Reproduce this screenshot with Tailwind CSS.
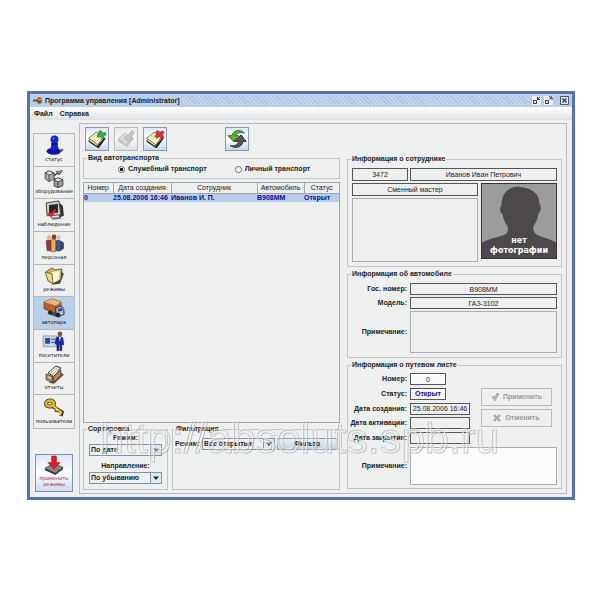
<!DOCTYPE html>
<html lang="ru">
<head>
<meta charset="utf-8">
<title>Программа управления</title>
<script src="https://cdn.jsdelivr.net/npm/@tailwindcss/browser@4"></script>
</head>
<body class="bg-white font-['Liberation_Sans',Arial,sans-serif] text-[7px] leading-[8px] text-[#222]">
<svg class="hidden">
  <symbol id="notes" viewBox="0 0 24 24">
    <path d="M3 15l9-9 10 6-8 11z" fill="#222"/>
    <path d="M2 14l8-7 10 5-8 9z" fill="#f0e58a" stroke="#333" stroke-width="1"/>
    <path d="M2 11l9-7 9 5-7 10z" fill="#fffde0" stroke="#444" stroke-width=".9"/>
    <path d="M6 11l5-4M8 13l6-5M11 15l5-5" stroke="#dcc04a" stroke-width="1.100"/>
    <path d="M2 15l11 7 9-11" fill="none" stroke="#222" stroke-width="1.200"/>
  </symbol>
</svg>
<main class="pt-[91px] pr-[25px] pb-24 pl-[27px]">
<div class="relative border-3 border-[#5670b4] border-t-[#5872ac] bg-[#eef0f0]">
  <header class="flex h-[13px] items-center gap-[3px] bg-[#b9cfe8] pr-[3px] pl-[3px]">
    <svg class="h-[9px] w-[9px]" viewBox="0 0 9 9"><path d="M0 3.500h4l1-2h3l1 3-1 3H5l-1-2H0z" fill="#7b4a20"/><path d="M5 3h3v1.500H5z" fill="#f0a840"/></svg>
    <h1 class="font-bold">Программа управления [Administrator]</h1>
    <div class="h-[9px] flex-1 bg-[repeating-linear-gradient(45deg,#abc2e0_0_1px,#c2d6ec_1px_3px)]"></div>
    <div class="flex items-center gap-[3px]">
      <button aria-label="Свернуть" class="h-[9px] w-[9px]"><svg viewBox="0 0 9 9"><path d="M0 0h9v9H0z" fill="#eef2f7"/><path d="M1.500 4.500h3v3h-3z" fill="none" stroke="#333"/><path d="M5.500 1v2.500H8M8 1L5.500 3.500" fill="none" stroke="#333"/></svg></button>
      <button aria-label="Развернуть" class="h-[9px] w-[9px]"><svg viewBox="0 0 9 9"><path d="M0 0h9v9H0z" fill="#eef2f7"/><path d="M1.500 4.500h3v3h-3z" fill="none" stroke="#333"/><path d="M5 1h3v3M5.500 3.500L8 1" fill="none" stroke="#333"/></svg></button>
      <button aria-label="Закрыть" class="ml-1 h-[9px] w-[9px]"><svg viewBox="0 0 9 9"><path d="M.5.5h8v8h-8z" fill="#dfe9f3" stroke="#45566b"/><path d="M2.500 2.500l4 4M6.500 2.500l-4 4" stroke="#333" stroke-width="1.200"/></svg></button>
    </div>
  </header>
  <nav class="flex h-[13px] items-center gap-[7px] bg-linear-to-b from-white to-[#dfe0e1] px-1 font-bold">
    <button>Файл</button><button>Справка</button>
  </nav>
  <div class="flex gap-1 pt-[3px] pr-[5px] pb-[3px] pl-[3px]">
    <aside class="flex w-[42px] flex-col justify-between pt-[10px] pb-[2px] font-['DejaVu_Sans',sans-serif] text-[5px] leading-[6px] text-black">
      <div class="grid h-[296px] grid-rows-9 border border-[#b5b8bb] *:flex *:flex-col *:items-center *:justify-end *:border-b *:border-[#b5b8bb] *:pb-1 *:last:border-b-0">
        <button><svg class="h-[22px] w-[22px]" viewBox="0 0 22 22"><path d="M11 19l8-4 2 1-6 5z" fill="#555"/><ellipse cx="10.500" cy="17.500" rx="7" ry="3.500" fill="#0a17a0"/><path d="M7 16l2-7h5l2 7z" fill="#1426c8"/><circle cx="11.500" cy="5.500" r="4" fill="#1527cf"/><path d="M8 9h7v2H8z" fill="#0b157b"/><circle cx="10.500" cy="4.500" r="1" fill="#6b80ff"/></svg>статус</button>
        <button><svg class="h-[22px] w-[22px]" viewBox="0 0 22 22" stroke="#333" stroke-width=".8"><path d="M9 10l9-6M9 9l7 8" stroke-width="1.300"/><path d="M2 6l4-2 5 2v6l-5 3-4-3z" fill="#aaa"/><path d="M2 6l4 2 5-2-5-2z" fill="#eee"/><path d="M6 8v6"/><path d="M11 13l4-2 5 2v6l-5 2-4-2z" fill="#999"/><path d="M11 13l4 2 5-2-5-2z" fill="#eee"/><path d="M15 15v6"/><path d="M13 4l3 4 4-5" fill="#888"/></svg>оборудование</button>
        <button><svg class="h-[22px] w-[22px]" viewBox="0 0 22 22"><path d="M16 19l5-2-1-10-3-3z" fill="#333"/><path d="M3 4l13-2 2 14-14 1z" fill="#ccc" stroke="#444"/><path d="M6 6l9-1v9l-9 .5z" fill="#262626"/><path d="M3 13l4 2 5-5 1 2-5 7z" fill="#d51f2a"/><path d="M7 19l10-1 2 2-9 1z" fill="#777"/></svg>наблюдение</button>
        <button><svg class="h-[22px] w-[22px]" viewBox="0 0 22 22"><path d="M15 20l6-3v-6l-3-2z" fill="#444"/><path d="M3 9q3-2 5 0v10H4z" fill="#9a3348" stroke="#333" stroke-width=".5"/><path d="M8 8q3-2 5 0v12H8z" fill="#e9b727" stroke="#333" stroke-width=".5"/><path d="M13 9q4-2 5 1v9h-5z" fill="#3d4fae" stroke="#333" stroke-width=".5"/><circle cx="6" cy="5.500" r="2.300" fill="#e8b28f"/><circle cx="11" cy="5" r="2.400" fill="#724525"/><circle cx="15.500" cy="5.500" r="2.300" fill="#edbd9b"/></svg>персонал</button>
        <button><svg class="h-[22px] w-[22px]" viewBox="0 0 22 22"><path d="M9 20l8-1 4-10-3-3z" fill="#444"/><path d="M4 6l5-3 3 2 7-1-1 11-8 4-5-3z" fill="#d8b060" stroke="#4b3c1c" stroke-width=".8"/><path d="M7 8l10-3-1 10-7 4z" fill="#fff8d8"/><path d="M2 7l7 2 1 10-5-3z" fill="#f3d58c" stroke="#594820" stroke-width=".8"/></svg>режимы</button>
        <button aria-current="page" class="bg-[#b9d0ea]"><svg class="h-[22px] w-[22px]" viewBox="0 0 22 22"><path d="M4 17l12 4 6-5-6-4z" fill="#445"/><path d="M1 5l8-3 9 3v9l-5 3-12-5z" fill="#b5632b" stroke="#57300f" stroke-width=".7"/><path d="M1 5l12 4 5-4-9-3z" fill="#edb37c"/><path d="M13 9v8" stroke="#57300f"/><path d="M13 11l6-2 2 4v5l-6 1-2-2z" fill="#bac2df" stroke="#223" stroke-width=".8"/><path d="M15 12l4-1 1 3-5 1z" fill="#334a8c"/><circle cx="7" cy="15.500" r="2" fill="#222"/><circle cx="15" cy="18" r="2.200" fill="#222"/></svg>автопарк</button>
        <button><svg class="h-[22px] w-[24px]" viewBox="0 0 24 22"><path d="M1 6h14v11H1z" fill="#c8d5ef" stroke="#7788a6" stroke-width=".7"/><path d="M3 8h5v6H3zM9 9h4v1H9zM9 12h4v1H9z" fill="#304a80"/><path d="M14 8q4-3 7 0l1 7h-2v6h-2v-6h-1v6h-2v-6l-2-1z" fill="#16279a" stroke="#111b54" stroke-width=".5"/><path d="M17 7h2l-1 5z" fill="#fff"/><circle cx="18" cy="4" r="2.400" fill="#7e5238"/></svg>посетители</button>
        <button><svg class="h-[22px] w-[22px]" viewBox="0 0 22 22"><path d="M6 20l5 1 10-9-3-2z" fill="#555"/><path d="M5 10L13 3l5 2-7 9z" fill="#fff" stroke="#333"/><path d="M7 11l8-7M9 12l8-7" stroke="#999"/><path d="M3 11l7 3v6l-7-3zM10 14l8-7v6l-8 7z" fill="#b38a60" stroke="#4c321b" stroke-width=".8"/><path d="M5 14l3 1.500" stroke="#fff"/></svg>отчеты</button>
        <button><svg class="h-[22px] w-[22px]" viewBox="0 0 22 22" fill="none"><path d="M9 10l10 6-1 4M14 13l-1 3" stroke="#49380c" stroke-width="3.500"/><ellipse cx="7" cy="7.500" rx="4" ry="3" stroke="#49380c" stroke-width="4"/><ellipse cx="7" cy="7.500" rx="4" ry="3" stroke="#e4bd35" stroke-width="2.400"/><path d="M10 10l8 6-1 3M14 13l-1 2" stroke="#ecd04f" stroke-width="1.800"/></svg>пользователи</button>
      </div>
      <button class="mx-auto flex h-[38px] w-[38px] flex-col items-center justify-end border border-[#7f93ad] bg-linear-to-b from-[#dce7f4] via-white to-[#cbdaeb] pb-1 text-[#b3122b]"><svg class="h-[20px] w-[20px]" viewBox="0 0 21 21"><path d="M1 14l9-5 10 4-8 6z" fill="#888" stroke="#333" stroke-width=".7"/><path d="M1 14v2l11 5 8-6v-2l-8 6z" fill="#3c3c3c"/><path d="M8 1h5v7h4l-6.500 7L4 8h4z" fill="#de1d2b" stroke="#8b0d18" stroke-width=".5"/></svg>применить<br>режимы</button>
    </aside>
    <section class="flex min-w-0 flex-1 gap-[7px] border border-[#b9bcbe] pt-[3px] pr-1 pb-[3px] pl-[3px]">
      <div class="flex min-w-0 flex-1 flex-col">
        <div class="flex gap-[5px] pl-[2px] *:h-6 *:w-6 *:border *:border-[#8799ae] *:bg-linear-to-b *:from-[#dce8f5] *:via-white *:to-[#c3d5e9] *:p-px">
          <button aria-label="Добавить"><svg viewBox="0 0 24 24"><use href="#notes"/><path d="M14 3l3-1 2 3 3-1 1 3-3 1 1 3-3 1-1-3-4 1-1-3 3-1z" fill="#3cae3c" stroke="#1f7a25" stroke-width=".8"/></svg></button>
          <button aria-label="Изменить" disabled class="opacity-60 grayscale"><svg viewBox="0 0 24 24"><path d="M2 14l9-8 10 5-8 10z" fill="#b5b5b5" stroke="#888"/><path d="M3 11l8-6 8 5-7 8z" fill="#d2d2d2" stroke="#999"/><path d="M11 9l3-1 5-6 3 2-4 6 1 3-5 1-4-2z" fill="#aaa" stroke="#888"/></svg></button>
          <button aria-label="Удалить"><svg viewBox="0 0 24 24"><use href="#notes"/><path d="M13 3l3-1 2 2 3-2 2 2-2 3 2 3-3 2-3-3-3 2-2-2 2-3z" fill="#d23a32" stroke="#8e1a18" stroke-width=".7"/></svg></button>
          <button aria-label="Обновить" class="ml-[53px]"><svg viewBox="0 0 24 24"><path d="M21 5C15-1 7 2 6 8H1l7 7 6-7h-4c1-3 6-5 11-3z" fill="#58b432" stroke="#235b16"/><path d="M4 20c6 4 14 2 15-5h4l-6-8-8 8h5c-1 4-5 6-10 5z" fill="#555" stroke="#222"/></svg></button>
        </div>
        <fieldset class="mt-[3px] h-[25px] border border-[#c2c5c7]">
          <legend class="ml-[3px] px-px font-bold">Вид автотранспорта</legend>
          <div class="flex gap-7 pt-[3px] pl-[34px] font-bold">
            <label class="flex items-center gap-[3px]"><input type="radio" name="kind" checked class="h-[7px] w-[7px] appearance-none rounded-full border border-[#666] bg-white checked:bg-[radial-gradient(#222_45%,#fff_55%)]">Служебный транспорт</label>
            <label class="flex items-center gap-[3px]"><input type="radio" name="kind" class="h-[7px] w-[7px] appearance-none rounded-full border border-[#666] bg-white checked:bg-[radial-gradient(#222_45%,#fff_55%)]">Личный транспорт</label>
          </div>
        </fieldset>
        <div class="mt-[3px] h-[241px] border border-[#9fa4a9]">
          <table class="w-full table-fixed border-collapse whitespace-nowrap">
            <colgroup><col class="w-[29px]"><col class="w-[58px]"><col><col class="w-[47px]"><col class="w-[35px]"></colgroup>
            <thead><tr class="h-[10px] *:border-r *:border-b *:border-[#9fa4a9] *:p-0 *:font-normal *:last:border-r-0"><th>Номер</th><th>Дата создания</th><th>Сотрудник</th><th>Автомобиль</th><th>Статус</th></tr></thead>
            <tbody><tr class="h-[9px] bg-[#b9cfe8] font-bold text-[#0b0b9c] *:p-0"><td>0</td><td>25.08.2006 16:46</td><td>Иванов И. П.</td><td>В908ММ</td><td>Открыт</td></tr></tbody>
          </table>
        </div>
        <div class="mt-[2px] flex gap-1 font-bold">
          <fieldset class="h-[65px] w-[85px] border border-[#c2c5c7] px-[5px]">
            <legend class="-ml-[2px] px-px">Сортировка</legend>
            <label for="sort" class="block pt-px text-center">Режим:</label>
            <div class="relative mt-[2px]"><select id="sort" class="block h-3 w-full appearance-none border border-[#7f93ad] bg-[#eef0f0] px-px leading-[8px]"><option>По дате</option></select><svg class="pointer-events-none absolute top-0 right-0 h-3 w-3" viewBox="0 0 12 12"><path d="M.5.5h11v11H.5z" fill="#dce7f3" stroke="#7f93ad"/><path d="M3 4.500h6L6 8z" fill="#222"/></svg></div>
            <label for="dir" class="mt-[6px] block text-center">Направление:</label>
            <div class="relative mt-[2px]"><select id="dir" class="block h-3 w-full appearance-none border border-[#7f93ad] bg-[#eef0f0] px-px leading-[8px]"><option>По убыванию</option></select><svg class="pointer-events-none absolute top-0 right-0 h-3 w-3" viewBox="0 0 12 12"><path d="M.5.5h11v11H.5z" fill="#dce7f3" stroke="#7f93ad"/><path d="M3 4.500h6L6 8z" fill="#222"/></svg></div>
          </fieldset>
          <fieldset class="h-[65px] min-w-0 flex-1 border border-[#c2c5c7] px-[2px]">
            <legend class="px-px">Фильтрация</legend>
            <div class="flex items-center gap-[2px] pt-[5px]">
              <label for="filter">Режим:</label>
              <div class="relative min-w-0 flex-1"><select id="filter" class="block h-3 w-full appearance-none border border-[#7f93ad] bg-[#eef0f0] px-px leading-[8px]"><option>Все открытые</option></select><svg class="pointer-events-none absolute top-0 right-0 h-3 w-3" viewBox="0 0 12 12"><path d="M.5.5h11v11H.5z" fill="#dce7f3" stroke="#7f93ad"/><path d="M3 4.500h6L6 8z" fill="#222"/></svg></div>
              <button class="h-3 w-[60px] border border-[#8fa3bd] bg-linear-to-b from-[#e6eef7] to-[#c0d2e6]">Фильтр</button>
            </div>
          </fieldset>
        </div>
      </div>
      <div class="flex w-[215px] flex-col gap-[3px] pt-7">
        <fieldset class="h-[112px] border border-[#c2c5c7] px-1">
          <legend class="-ml-px px-px font-bold">Информация о сотруднике</legend>
          <div class="flex gap-[2px] pt-[5px]">
            <input aria-label="Табельный номер" readonly value="3472" class="h-[13px] w-14 border border-[#555] text-center">
            <input aria-label="Фамилия, имя, отчество" readonly value="Иванов Иван Петрович" class="h-[13px] min-w-0 flex-1 border border-[#555] text-center">
          </div>
          <div class="mt-[2px] flex gap-[3px]">
            <div class="flex min-w-0 flex-1 flex-col gap-[2px]">
              <input aria-label="Должность" readonly value="Сменный мастер" class="h-[13px] w-full border border-[#555] text-center">
              <textarea aria-label="Сведения" readonly class="block h-16 w-full resize-none border border-[#a9adb0]"></textarea>
            </div>
            <figure class="relative h-[76px] w-[76px] border border-[#333] bg-[#9a9c9d]">
              <svg class="h-full w-full" viewBox="0 0 76 76"><path d="M0 76V60c10-5 20-6 25-9 2-2 2-5 1-8-3-4-4-8-5-12-3-2-3-7-1-9C20 9 28 2 39 3s20 6 20 17c2 3 2 8-1 10-1 5-2 9-5 13-1 3 0 6 2 8 5 4 13 4 21 9v16z" fill="#4c4948"/></svg>
              <figcaption class="absolute inset-x-0 bottom-[2px] text-center font-['DejaVu_Sans',sans-serif] text-[8px] leading-[10px] font-bold text-white">нет<br>фотографии</figcaption>
            </figure>
          </div>
        </fieldset>
        <fieldset class="h-[88px] border border-[#c2c5c7] px-1">
          <legend class="-ml-px px-px font-bold">Информация об автомобиле</legend>
          <div class="grid grid-cols-[55px_1fr] items-center gap-x-[3px] gap-y-[2px] pt-[5px] *:[label]:text-right *:[label]:font-bold">
            <label for="plate">Гос. номер:</label><input id="plate" readonly value="В908ММ" class="h-3 w-full border border-[#555] text-center">
            <label for="model">Модель:</label><input id="model" readonly value="ГАЗ-3102" class="h-3 w-full border border-[#555] text-center">
            <label for="carnote">Примечание:</label><textarea id="carnote" readonly class="block h-[42px] w-full resize-none border border-[#a9adb0]"></textarea>
          </div>
        </fieldset>
        <fieldset class="h-[128px] border border-[#c2c5c7] px-1">
          <legend class="-ml-px px-px font-bold">Информация о путевом листе</legend>
          <div class="flex pt-[4px]">
            <div class="grid h-[71px] grid-cols-[55px_60px] content-between items-center gap-x-[3px] whitespace-nowrap *:[label]:justify-self-end *:[label]:font-bold">
              <label for="num">Номер:</label><input id="num" readonly value="0" class="h-3 w-9 border border-[#555] bg-[#f8f9f9] text-center">
              <label for="state">Статус:</label><input id="state" readonly value="Открыт" class="h-3 w-9 border border-[#555] bg-[#f8f9f9] text-center font-bold text-[#0b0b9c]">
              <label for="created">Дата создания:</label><input id="created" readonly value="25.08.2006 16:46" class="h-3 w-full border border-[#555] text-center">
              <label for="activated">Дата активации:</label><input id="activated" readonly class="h-3 w-full border border-[#555]">
              <label for="closed">Дата закрытия:</label><input id="closed" readonly class="h-3 w-full border border-[#555]">
            </div>
            <div class="flex flex-1 flex-col gap-[3px] pt-[15px] pr-[5px] pl-[11px] font-bold text-[#999] *:flex *:h-[18px] *:items-center *:justify-center *:gap-1 *:border *:border-[#b9bcbe]">
              <button disabled><svg class="h-2 w-2" viewBox="0 0 8 8"><path d="M1 4l2-1 1 1 2-4 2 1-4 7z" fill="#b5b5b5" stroke="#999" stroke-width=".6"/></svg>Применить</button>
              <button disabled><svg class="h-2 w-2" viewBox="0 0 8 8"><path d="M1 1l6 6M7 1L1 7" stroke="#aaa" stroke-width="2.400"/></svg>Отменить</button>
            </div>
          </div>
          <div class="mt-[3px] grid grid-cols-[55px_1fr] items-center gap-x-[3px]">
            <label for="tripnote" class="text-right font-bold">Примечание:</label><textarea id="tripnote" class="block h-[38px] w-full resize-none border border-[#a9adb0] bg-[#fafbfb]"></textarea>
          </div>
        </fieldset>
      </div>
    </section>
  </div>
  <p class="pointer-events-none absolute bottom-[36px] left-[69px] text-[43px] leading-[48px] whitespace-nowrap text-transparent drop-shadow-[1px_1px_0_#a6a6a6] [-webkit-text-stroke:1px_#f4f5f5b3]">http://absoluts.spb.ru</p>
</div>
</main>
</body>
</html>
